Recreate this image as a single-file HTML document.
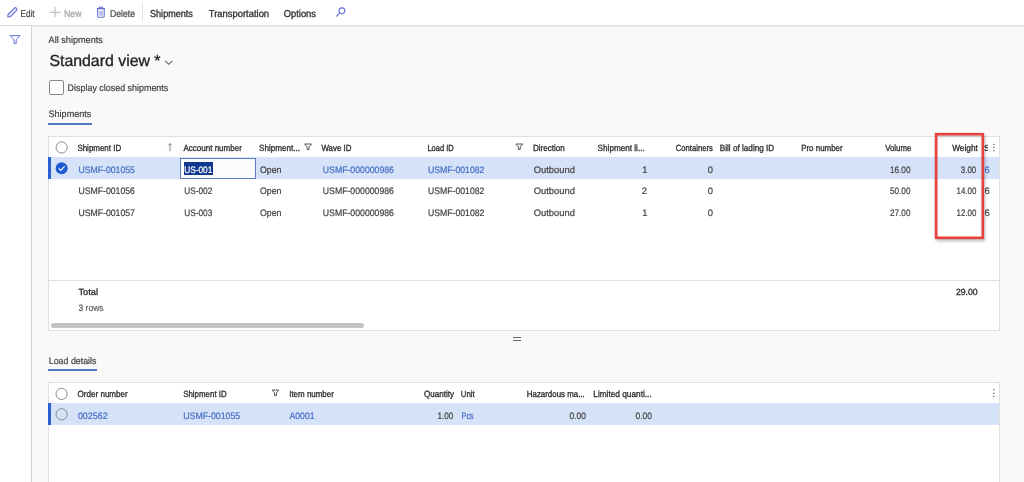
<!DOCTYPE html>
<html><head><meta charset="utf-8"><title>All shipments</title>
<style>
html,body{margin:0;padding:0;width:1024px;height:482px;overflow:hidden;background:#faf9f8;font-family:"Liberation Sans",sans-serif;}
.abs{position:absolute;}
#toolbar{left:0;top:0;width:1024px;height:25px;background:#fff;border-bottom:1px solid #dcdcdc;box-shadow:0 1px 1px rgba(0,0,0,0.05);}
#sidebar{left:0;top:26px;width:31px;height:456px;background:#fff;border-right:1px solid #d4d4d4;}
.grid{background:#fff;border:1px solid #e1dfdd;box-sizing:border-box;}
.selrow{background:#d6e2f8;}
.bar{background:#2b5fd0;}
svg{position:absolute;left:0;top:0;will-change:transform;text-rendering:geometricPrecision;}
#txt{filter:blur(0.35px);}
</style></head>
<body>
<div id="toolbar" class="abs"></div>
<div id="sidebar" class="abs"></div>

<!-- checkbox -->
<div class="abs" style="left:49px;top:80px;width:13px;height:13px;border:1px solid #8a8886;border-radius:2px;background:#fff;"></div>
<!-- tab underline -->
<div class="abs" style="left:48px;top:123px;width:44px;height:2px;background:#4f7bcc;"></div>

<!-- grid 1 -->
<div class="abs grid" style="left:48px;top:136px;width:952px;height:195px;"></div>
<div class="abs selrow" style="left:49px;top:157px;width:950px;height:22px;"></div>
<div class="abs bar" style="left:48px;top:157px;width:3px;height:22px;"></div>
<div class="abs" style="left:49px;top:280px;width:950px;height:1px;background:#e1dfdd;"></div>
<div class="abs" style="left:51px;top:323px;width:313px;height:5px;background:#c4c3c2;border-radius:3px;"></div>
<!-- input -->
<div class="abs" style="left:180px;top:158px;width:74px;height:19px;border:1px solid #5b7ec6;background:#fbfbfb;"></div>
<div class="abs" style="left:184px;top:162px;width:29px;height:13px;background:#11398e;"></div>

<!-- splitter -->
<div class="abs" style="left:513px;top:337px;width:8px;height:1px;background:#6a6a6a;"></div>
<div class="abs" style="left:513px;top:340px;width:8px;height:1px;background:#6a6a6a;"></div>

<!-- load details underline -->
<div class="abs" style="left:48px;top:369px;width:49px;height:2px;background:#4f7bcc;"></div>

<!-- grid 2 -->
<div class="abs grid" style="left:48px;top:382px;width:952px;height:120px;"></div>
<div class="abs selrow" style="left:49px;top:403px;width:950px;height:22px;"></div>
<div class="abs bar" style="left:48px;top:403px;width:3px;height:22px;"></div>

<!-- red highlight box -->
<div class="abs" style="left:935px;top:133px;width:49px;height:106px;box-shadow:1px 2px 3px rgba(0,0,0,0.28);"></div>
<div class="abs" style="left:937px;top:135px;width:45px;height:102px;box-shadow:inset 0 2px 3px rgba(0,0,0,0.15);"></div>
<svg width="1024" height="482" style="filter:blur(0.3px)"><rect x="936.1" y="134.2" width="46.7" height="103.6" fill="none" stroke="#e8403f" stroke-width="2.6"/></svg>

<svg width="1024" height="482" viewBox="0 0 1024 482" font-family="Liberation Sans">
<!-- toolbar icons -->
<g transform="translate(12.35 12.4) rotate(-45)">
  <path d="M-6.3 0 L-4.6 -1.6 H4.2 A1.6 1.6 0 0 1 4.2 1.6 H-4.6 Z" fill="#e6e8fb" stroke="#6472d8" stroke-width="1.15" stroke-linejoin="round"/>
</g>
<g stroke="#b3b1af" stroke-width="1">
  <path d="M49.6 12.3 H60.6 M55 6.8 V17.3"/>
</g>
<g fill="none" stroke="#6472d8" stroke-width="1.1">
  <path d="M96.8 8.6 H105"/>
  <path d="M99.3 8.4 V7.3 H102.6 V8.4"/>
  <rect x="97.6" y="8.8" width="6.6" height="8.4" rx="0.6"/>
</g>
<rect x="99.2" y="10.8" width="3.6" height="5" fill="#b4b8ee"/>
<path d="M142.5 2 V22" stroke="#e6e5e4" stroke-width="1"/>
<g fill="none" stroke="#6472d8" stroke-width="1.1">
  <circle cx="341.9" cy="10.8" r="2.9"/>
  <path d="M339.8 12.9 L336.4 16.5"/>
</g>
<!-- sidebar filter -->
<path d="M10.2 35.6 H20 L16.2 39.8 V43.4 H14 V39.8 Z" fill="none" stroke="#6472d8" stroke-width="1" stroke-linejoin="round"/>
<!-- title chevron -->
<path d="M165.3 60.8 L168.8 64.3 L172.3 60.8" fill="none" stroke="#605e5c" stroke-width="1.1"/>
<!-- grid1 header icons -->
<circle cx="61.65" cy="147.45" r="5.6" fill="none" stroke="#8a8886" stroke-width="1"/>
<circle cx="61.65" cy="168.2" r="6" fill="#1f5bd4"/>
<path d="M58.8 168.4 L60.8 170.4 L64.6 166.4" fill="none" stroke="#fff" stroke-width="1.1"/>
<path d="M170 143.6 V151.2 M168.3 145.3 L170 143.6 L171.7 145.3" fill="none" stroke="#6e6c6a" stroke-width="0.8"/>
<g fill="none" stroke="#5a5856" stroke-width="1" stroke-linejoin="round">
  <path d="M304.7 144 H311.5 L309 146.9 V149.6 H307.2 V146.9 Z"/>
  <path d="M515.9 144 H522.7 L520.2 146.9 V149.6 H518.4 V146.9 Z"/>
  <path d="M272.1 390 H278.9 L276.4 392.9 V395.6 H274.6 V392.9 Z"/>
</g>
<g fill="#605e5c">
  <circle cx="993.9" cy="144.4" r="0.75"/><circle cx="993.9" cy="147.6" r="0.75"/><circle cx="993.9" cy="150.8" r="0.75"/>
  <circle cx="993.8" cy="389.8" r="0.75"/><circle cx="993.8" cy="393.2" r="0.75"/><circle cx="993.8" cy="396.6" r="0.75"/>
</g>
<!-- grid2 circles -->
<circle cx="61.6" cy="393.9" r="5.6" fill="none" stroke="#8a8886" stroke-width="1"/>
<circle cx="61.6" cy="414.3" r="5.6" fill="none" stroke="#8a8886" stroke-width="1"/>
<clipPath id="hdrclip"><rect x="980" y="138" width="8" height="18"/></clipPath>
<text x="984" y="151" font-size="9" font-weight="700" fill="#323130" clip-path="url(#hdrclip)">S</text>
<g id="txt"><text x="20.50" y="17.00" font-size="10" stroke="#424140" stroke-width="0.2" fill="#424140" textLength="14.07" lengthAdjust="spacingAndGlyphs">Edit</text>
<text x="64.00" y="17.00" font-size="10" stroke="#a19f9d" stroke-width="0.2" fill="#a19f9d" textLength="17.51" lengthAdjust="spacingAndGlyphs">New</text>
<text x="110.00" y="17.00" font-size="10" stroke="#424140" stroke-width="0.2" fill="#424140" textLength="24.92" lengthAdjust="spacingAndGlyphs">Delete</text>
<text x="150.00" y="17.00" font-size="10" stroke="#2f2e2d" stroke-width="0.32" fill="#2f2e2d" textLength="42.92" lengthAdjust="spacingAndGlyphs">Shipments</text>
<text x="208.75" y="17.00" font-size="10" stroke="#2f2e2d" stroke-width="0.32" fill="#2f2e2d" textLength="60.35" lengthAdjust="spacingAndGlyphs">Transportation</text>
<text x="283.75" y="17.00" font-size="10" stroke="#2f2e2d" stroke-width="0.32" fill="#2f2e2d" textLength="32.25" lengthAdjust="spacingAndGlyphs">Options</text>
<text x="48.60" y="43.00" font-size="9.4" stroke="#424140" stroke-width="0.2" fill="#424140" textLength="54.27" lengthAdjust="spacingAndGlyphs">All shipments</text>
<text x="49.40" y="66.00" font-size="16" stroke="#252423" stroke-width="0.32" fill="#252423" textLength="111.16" lengthAdjust="spacingAndGlyphs">Standard view *</text>
<text x="67.60" y="91.00" font-size="9.4" stroke="#424140" stroke-width="0.2" fill="#424140" textLength="100.69" lengthAdjust="spacingAndGlyphs">Display closed shipments</text>
<text x="48.50" y="117.00" font-size="9.4" stroke="#424140" stroke-width="0.2" fill="#424140" textLength="42.79" lengthAdjust="spacingAndGlyphs">Shipments</text>
<text x="77.40" y="151.00" font-size="9" stroke="#2f2e2d" stroke-width="0.32" fill="#2f2e2d" textLength="43.79" lengthAdjust="spacingAndGlyphs">Shipment ID</text>
<text x="183.40" y="151.00" font-size="9" stroke="#2f2e2d" stroke-width="0.32" fill="#2f2e2d" textLength="58.50" lengthAdjust="spacingAndGlyphs">Account number</text>
<text x="259.00" y="151.00" font-size="9" stroke="#2f2e2d" stroke-width="0.32" fill="#2f2e2d" textLength="40.88" lengthAdjust="spacingAndGlyphs">Shipment...</text>
<text x="321.40" y="151.00" font-size="9" stroke="#2f2e2d" stroke-width="0.32" fill="#2f2e2d" textLength="30.05" lengthAdjust="spacingAndGlyphs">Wave ID</text>
<text x="427.40" y="151.00" font-size="9" stroke="#2f2e2d" stroke-width="0.32" fill="#2f2e2d" textLength="26.31" lengthAdjust="spacingAndGlyphs">Load ID</text>
<text x="533.00" y="151.00" font-size="9" stroke="#2f2e2d" stroke-width="0.32" fill="#2f2e2d" textLength="31.77" lengthAdjust="spacingAndGlyphs">Direction</text>
<text x="597.60" y="151.00" font-size="9" stroke="#2f2e2d" stroke-width="0.32" fill="#2f2e2d" textLength="47.13" lengthAdjust="spacingAndGlyphs">Shipment li...</text>
<text x="675.80" y="151.00" font-size="9" stroke="#2f2e2d" stroke-width="0.32" fill="#2f2e2d" textLength="37.10" lengthAdjust="spacingAndGlyphs">Containers</text>
<text x="719.80" y="151.00" font-size="9" stroke="#2f2e2d" stroke-width="0.32" fill="#2f2e2d" textLength="54.43" lengthAdjust="spacingAndGlyphs">Bill of lading ID</text>
<text x="801.20" y="151.00" font-size="9" stroke="#2f2e2d" stroke-width="0.32" fill="#2f2e2d" textLength="41.43" lengthAdjust="spacingAndGlyphs">Pro number</text>
<text x="885.20" y="151.00" font-size="9" stroke="#2f2e2d" stroke-width="0.32" fill="#2f2e2d" textLength="26.23" lengthAdjust="spacingAndGlyphs">Volume</text>
<text x="952.20" y="151.00" font-size="9" stroke="#2f2e2d" stroke-width="0.32" fill="#2f2e2d" textLength="25.67" lengthAdjust="spacingAndGlyphs">Weight</text>
<text x="78.40" y="173.00" font-size="9.4" stroke="#436ec4" stroke-width="0.2" fill="#436ec4" textLength="56.57" lengthAdjust="spacingAndGlyphs">USMF-001055</text>
<text x="184.20" y="173.00" font-size="9.4" stroke="#ffffff" stroke-width="0.2" fill="#ffffff" textLength="28.12" lengthAdjust="spacingAndGlyphs">US-001</text>
<text x="260.00" y="173.00" font-size="9.4" stroke="#424140" stroke-width="0.2" fill="#424140" textLength="21.44" lengthAdjust="spacingAndGlyphs">Open</text>
<text x="322.80" y="173.00" font-size="9.4" stroke="#436ec4" stroke-width="0.2" fill="#436ec4" textLength="71.14" lengthAdjust="spacingAndGlyphs">USMF-000000986</text>
<text x="428.00" y="173.00" font-size="9.4" stroke="#436ec4" stroke-width="0.2" fill="#436ec4" textLength="56.37" lengthAdjust="spacingAndGlyphs">USMF-001082</text>
<text x="533.70" y="173.00" font-size="9.4" stroke="#424140" stroke-width="0.2" fill="#424140">Outbound</text>
<text x="642.20" y="173.00" font-size="9.4" stroke="#424140" stroke-width="0.2" fill="#424140">1</text>
<text x="707.80" y="173.00" font-size="9.4" stroke="#424140" stroke-width="0.2" fill="#424140">0</text>
<text x="890.00" y="173.00" font-size="9.4" stroke="#424140" stroke-width="0.2" fill="#424140" textLength="20.44" lengthAdjust="spacingAndGlyphs">16.00</text>
<text x="960.80" y="173.00" font-size="9.4" stroke="#424140" stroke-width="0.2" fill="#424140" textLength="15.46" lengthAdjust="spacingAndGlyphs">3.00</text>
<text x="984.60" y="173.00" font-size="9.4" stroke="#436ec4" stroke-width="0.2" fill="#436ec4">6</text>
<text x="78.40" y="194.00" font-size="9.4" stroke="#424140" stroke-width="0.2" fill="#424140" textLength="56.57" lengthAdjust="spacingAndGlyphs">USMF-001056</text>
<text x="184.20" y="194.00" font-size="9.4" stroke="#424140" stroke-width="0.2" fill="#424140" textLength="28.12" lengthAdjust="spacingAndGlyphs">US-002</text>
<text x="260.00" y="194.00" font-size="9.4" stroke="#424140" stroke-width="0.2" fill="#424140" textLength="21.44" lengthAdjust="spacingAndGlyphs">Open</text>
<text x="322.80" y="194.00" font-size="9.4" stroke="#424140" stroke-width="0.2" fill="#424140" textLength="71.14" lengthAdjust="spacingAndGlyphs">USMF-000000986</text>
<text x="428.00" y="194.00" font-size="9.4" stroke="#424140" stroke-width="0.2" fill="#424140" textLength="56.37" lengthAdjust="spacingAndGlyphs">USMF-001082</text>
<text x="533.70" y="194.00" font-size="9.4" stroke="#424140" stroke-width="0.2" fill="#424140">Outbound</text>
<text x="641.80" y="194.00" font-size="9.4" stroke="#424140" stroke-width="0.2" fill="#424140">2</text>
<text x="707.80" y="194.00" font-size="9.4" stroke="#424140" stroke-width="0.2" fill="#424140">0</text>
<text x="890.00" y="194.00" font-size="9.4" stroke="#424140" stroke-width="0.2" fill="#424140" textLength="20.44" lengthAdjust="spacingAndGlyphs">50.00</text>
<text x="956.60" y="194.00" font-size="9.4" stroke="#424140" stroke-width="0.2" fill="#424140" textLength="19.85" lengthAdjust="spacingAndGlyphs">14.00</text>
<text x="984.60" y="194.00" font-size="9.4" stroke="#424140" stroke-width="0.2" fill="#424140">6</text>
<text x="78.40" y="216.00" font-size="9.4" stroke="#424140" stroke-width="0.2" fill="#424140" textLength="56.57" lengthAdjust="spacingAndGlyphs">USMF-001057</text>
<text x="184.20" y="216.00" font-size="9.4" stroke="#424140" stroke-width="0.2" fill="#424140" textLength="28.12" lengthAdjust="spacingAndGlyphs">US-003</text>
<text x="260.00" y="216.00" font-size="9.4" stroke="#424140" stroke-width="0.2" fill="#424140" textLength="21.44" lengthAdjust="spacingAndGlyphs">Open</text>
<text x="322.80" y="216.00" font-size="9.4" stroke="#424140" stroke-width="0.2" fill="#424140" textLength="71.14" lengthAdjust="spacingAndGlyphs">USMF-000000986</text>
<text x="428.00" y="216.00" font-size="9.4" stroke="#424140" stroke-width="0.2" fill="#424140" textLength="56.37" lengthAdjust="spacingAndGlyphs">USMF-001082</text>
<text x="533.70" y="216.00" font-size="9.4" stroke="#424140" stroke-width="0.2" fill="#424140">Outbound</text>
<text x="642.20" y="216.00" font-size="9.4" stroke="#424140" stroke-width="0.2" fill="#424140">1</text>
<text x="707.80" y="216.00" font-size="9.4" stroke="#424140" stroke-width="0.2" fill="#424140">0</text>
<text x="890.00" y="216.00" font-size="9.4" stroke="#424140" stroke-width="0.2" fill="#424140" textLength="20.44" lengthAdjust="spacingAndGlyphs">27.00</text>
<text x="956.60" y="216.00" font-size="9.4" stroke="#424140" stroke-width="0.2" fill="#424140" textLength="19.85" lengthAdjust="spacingAndGlyphs">12.00</text>
<text x="984.60" y="216.00" font-size="9.4" stroke="#424140" stroke-width="0.2" fill="#424140">6</text>
<text x="78.50" y="295.00" font-size="9" stroke="#2f2e2d" stroke-width="0.32" fill="#2f2e2d" textLength="19.52" lengthAdjust="spacingAndGlyphs">Total</text>
<text x="955.90" y="295.00" font-size="9" stroke="#2f2e2d" stroke-width="0.32" fill="#2f2e2d" textLength="21.75" lengthAdjust="spacingAndGlyphs">29.00</text>
<text x="78.50" y="311.00" font-size="9.4" stroke="#605e5c" stroke-width="0.2" fill="#605e5c" textLength="25.06" lengthAdjust="spacingAndGlyphs">3 rows</text>
<text x="48.80" y="364.00" font-size="9.4" stroke="#424140" stroke-width="0.2" fill="#424140" textLength="47.59" lengthAdjust="spacingAndGlyphs">Load details</text>
<text x="77.60" y="397.00" font-size="9" stroke="#2f2e2d" stroke-width="0.32" fill="#2f2e2d" textLength="50.13" lengthAdjust="spacingAndGlyphs">Order number</text>
<text x="183.20" y="397.00" font-size="9" stroke="#2f2e2d" stroke-width="0.32" fill="#2f2e2d" textLength="43.49" lengthAdjust="spacingAndGlyphs">Shipment ID</text>
<text x="289.20" y="397.00" font-size="9" stroke="#2f2e2d" stroke-width="0.32" fill="#2f2e2d" textLength="44.69" lengthAdjust="spacingAndGlyphs">Item number</text>
<text x="424.00" y="397.00" font-size="9" stroke="#2f2e2d" stroke-width="0.32" fill="#2f2e2d" textLength="29.98" lengthAdjust="spacingAndGlyphs">Quantity</text>
<text x="460.80" y="397.00" font-size="9" stroke="#2f2e2d" stroke-width="0.32" fill="#2f2e2d" textLength="13.85" lengthAdjust="spacingAndGlyphs">Unit</text>
<text x="526.80" y="397.00" font-size="9" stroke="#2f2e2d" stroke-width="0.32" fill="#2f2e2d" textLength="57.93" lengthAdjust="spacingAndGlyphs">Hazardous ma...</text>
<text x="593.30" y="397.00" font-size="9" stroke="#2f2e2d" stroke-width="0.32" fill="#2f2e2d" textLength="58.40" lengthAdjust="spacingAndGlyphs">Limited quanti...</text>
<text x="77.90" y="419.00" font-size="9.4" stroke="#436ec4" stroke-width="0.2" fill="#436ec4" textLength="29.88" lengthAdjust="spacingAndGlyphs">002562</text>
<text x="183.20" y="419.00" font-size="9.4" stroke="#436ec4" stroke-width="0.2" fill="#436ec4" textLength="57.07" lengthAdjust="spacingAndGlyphs">USMF-001055</text>
<text x="289.50" y="419.00" font-size="9.4" stroke="#436ec4" stroke-width="0.2" fill="#436ec4" textLength="25.10" lengthAdjust="spacingAndGlyphs">A0001</text>
<text x="437.40" y="419.00" font-size="9.4" stroke="#424140" stroke-width="0.2" fill="#424140" textLength="15.94" lengthAdjust="spacingAndGlyphs">1.00</text>
<text x="461.50" y="419.00" font-size="9.4" stroke="#436ec4" stroke-width="0.2" fill="#436ec4" textLength="12.22" lengthAdjust="spacingAndGlyphs">Pcs</text>
<text x="569.50" y="419.00" font-size="9.4" stroke="#424140" stroke-width="0.2" fill="#424140" textLength="16.33" lengthAdjust="spacingAndGlyphs">0.00</text>
<text x="635.50" y="419.00" font-size="9.4" stroke="#424140" stroke-width="0.2" fill="#424140" textLength="16.33" lengthAdjust="spacingAndGlyphs">0.00</text></g>
</svg>
</body></html>
